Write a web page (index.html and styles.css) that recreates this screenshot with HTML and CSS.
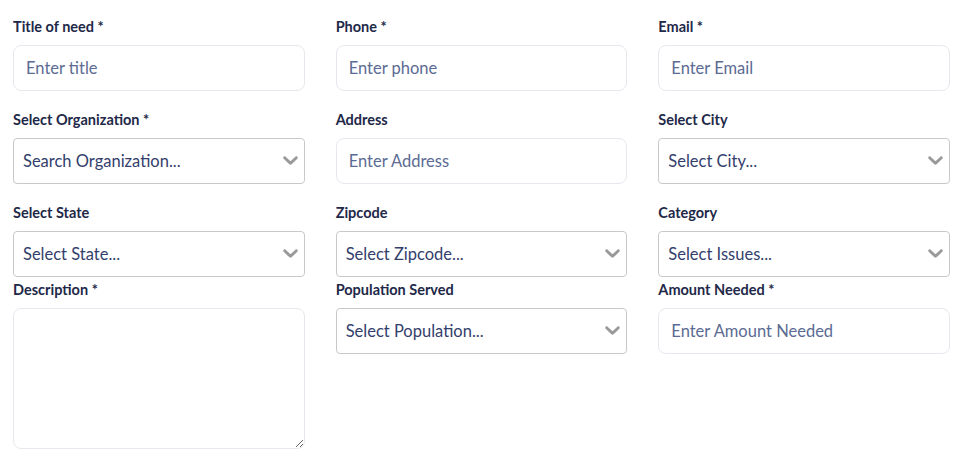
FILE: index.html
```html
<!DOCTYPE html>
<html lang="en">
<head>
  <meta charset="UTF-8" />
  <meta name="viewport" content="width=device-width, initial-scale=1.0" />
  <title>Create Need</title>
  <link rel="stylesheet" href="styles.css">
</head>
<body>
  <form class="need-form">
    <div class="field">
      <label>Title of need *</label>
      <input class="text-input" type="text" placeholder="Enter title" />
    </div>
    <div class="field">
      <label>Phone *</label>
      <input class="text-input" type="text" placeholder="Enter phone" />
    </div>
    <div class="field">
      <label>Email *</label>
      <input class="text-input" type="text" placeholder="Enter Email" />
    </div>

    <div class="field">
      <label>Select Organization *</label>
      <div class="select-box">
        <span class="select-value">Search Organization...</span>
        <svg class="chevron" viewBox="4 7 12 8"><path d="M4.516 7.548c0.436-0.446 1.043-0.481 1.576 0l3.908 3.747 3.908-3.747c0.533-0.481 1.141-0.446 1.574 0 0.436 0.445 0.408 1.197 0 1.615-0.406 0.418-4.695 4.502-4.695 4.502-0.217 0.223-0.502 0.335-0.787 0.335s-0.57-0.112-0.789-0.335c0 0-4.287-4.084-4.695-4.502s-0.436-1.17 0-1.615z"/></svg>
      </div>
    </div>
    <div class="field">
      <label>Address</label>
      <input class="text-input" type="text" placeholder="Enter Address" />
    </div>
    <div class="field">
      <label>Select City</label>
      <div class="select-box">
        <span class="select-value">Select City...</span>
        <svg class="chevron" viewBox="4 7 12 8"><path d="M4.516 7.548c0.436-0.446 1.043-0.481 1.576 0l3.908 3.747 3.908-3.747c0.533-0.481 1.141-0.446 1.574 0 0.436 0.445 0.408 1.197 0 1.615-0.406 0.418-4.695 4.502-4.695 4.502-0.217 0.223-0.502 0.335-0.787 0.335s-0.57-0.112-0.789-0.335c0 0-4.287-4.084-4.695-4.502s-0.436-1.17 0-1.615z"/></svg>
      </div>
    </div>

    <div class="field">
      <label>Select State</label>
      <div class="select-box">
        <span class="select-value">Select State...</span>
        <svg class="chevron" viewBox="4 7 12 8"><path d="M4.516 7.548c0.436-0.446 1.043-0.481 1.576 0l3.908 3.747 3.908-3.747c0.533-0.481 1.141-0.446 1.574 0 0.436 0.445 0.408 1.197 0 1.615-0.406 0.418-4.695 4.502-4.695 4.502-0.217 0.223-0.502 0.335-0.787 0.335s-0.57-0.112-0.789-0.335c0 0-4.287-4.084-4.695-4.502s-0.436-1.17 0-1.615z"/></svg>
      </div>
    </div>
    <div class="field">
      <label>Zipcode</label>
      <div class="select-box">
        <span class="select-value">Select Zipcode...</span>
        <svg class="chevron" viewBox="4 7 12 8"><path d="M4.516 7.548c0.436-0.446 1.043-0.481 1.576 0l3.908 3.747 3.908-3.747c0.533-0.481 1.141-0.446 1.574 0 0.436 0.445 0.408 1.197 0 1.615-0.406 0.418-4.695 4.502-4.695 4.502-0.217 0.223-0.502 0.335-0.787 0.335s-0.57-0.112-0.789-0.335c0 0-4.287-4.084-4.695-4.502s-0.436-1.17 0-1.615z"/></svg>
      </div>
    </div>
    <div class="field">
      <label>Category</label>
      <div class="select-box">
        <span class="select-value">Select Issues...</span>
        <svg class="chevron" viewBox="4 7 12 8"><path d="M4.516 7.548c0.436-0.446 1.043-0.481 1.576 0l3.908 3.747 3.908-3.747c0.533-0.481 1.141-0.446 1.574 0 0.436 0.445 0.408 1.197 0 1.615-0.406 0.418-4.695 4.502-4.695 4.502-0.217 0.223-0.502 0.335-0.787 0.335s-0.57-0.112-0.789-0.335c0 0-4.287-4.084-4.695-4.502s-0.436-1.17 0-1.615z"/></svg>
      </div>
    </div>

    <div class="field">
      <label>Description *</label>
      <textarea class="text-area"></textarea>
    </div>
    <div class="field">
      <label>Population Served</label>
      <div class="select-box">
        <span class="select-value">Select Population...</span>
        <svg class="chevron" viewBox="4 7 12 8"><path d="M4.516 7.548c0.436-0.446 1.043-0.481 1.576 0l3.908 3.747 3.908-3.747c0.533-0.481 1.141-0.446 1.574 0 0.436 0.445 0.408 1.197 0 1.615-0.406 0.418-4.695 4.502-4.695 4.502-0.217 0.223-0.502 0.335-0.787 0.335s-0.57-0.112-0.789-0.335c0 0-4.287-4.084-4.695-4.502s-0.436-1.17 0-1.615z"/></svg>
      </div>
    </div>
    <div class="field">
      <label>Amount Needed *</label>
      <input class="text-input" type="text" placeholder="Enter Amount Needed" />
    </div>
  </form>
</body>
</html>
```

FILE: styles.css
```css
body {
  margin: 0;
  background: #fff;
  font-family: Lato, "Open Sans", sans-serif;
}
.need-form {
  display: grid;
  grid-template-columns: repeat(3, 1fr);
  column-gap: 31px;
  align-items: start;
  padding: 17px 13px 16px;
}
.field {
  display: flex;
  flex-direction: column;
  padding-bottom: 3px;
}
.field label {
  font-size: 14.5px;
  line-height: 20px;
  font-weight: 700;
  color: #222848;
  margin-bottom: 8px;
}
.text-input, .text-area {
  box-sizing: border-box;
  width: 100%;
  border: 1px solid #e7e8ee;
  border-radius: 8px;
  font-family: inherit;
  font-size: 16.5px;
  color: #2f3d6b;
  background: #fff;
  outline: none;
}
.text-input {
  height: 46px;
  padding: 0 12px;
  margin-bottom: 16px;
}
.text-input::placeholder {
  color: #5b6b93;
}
.text-area {
  height: 141px;
  padding: 8px 12px;
  resize: vertical;
}
.select-box {
  box-sizing: border-box;
  height: 46px;
  display: flex;
  align-items: center;
  justify-content: space-between;
  border: 1px solid #c9c9c9;
  border-radius: 4px;
  padding: 0 6px 0 9px;
  background: #fff;
}
.select-value {
  font-size: 16.5px;
  color: #33406c;
}
.chevron {
  width: 15px;
  height: 10px;
  fill: #999;
}
```
